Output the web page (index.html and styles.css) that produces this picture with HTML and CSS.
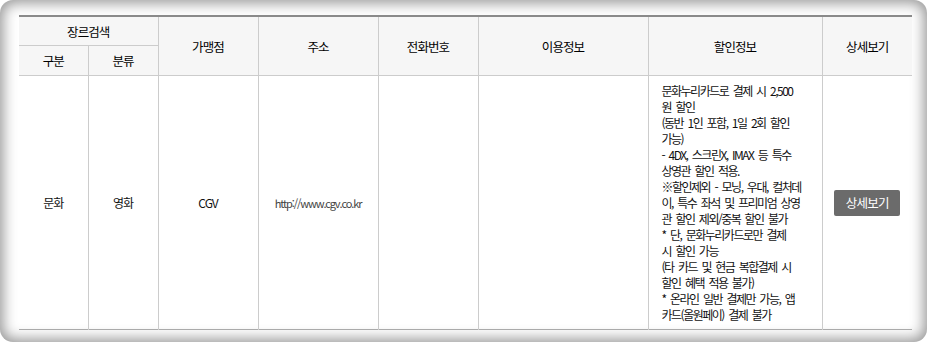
FILE: index.html
```html
<!DOCTYPE html>
<html lang="ko">
<head>
<meta charset="utf-8">
<link rel="stylesheet" href="styles.css">
</head>
<body>
<div class="frame">
  <table class="list">
    <colgroup>
      <col class="c1"><col class="c2"><col class="c3"><col class="c4"><col class="c5"><col class="c6"><col class="c7"><col class="c8">
    </colgroup>
    <thead>
      <tr class="h1">
        <th colspan="2">장르검색</th>
        <th rowspan="2">가맹점</th>
        <th rowspan="2">주소</th>
        <th rowspan="2">전화번호</th>
        <th rowspan="2">이용정보</th>
        <th rowspan="2">할인정보</th>
        <th rowspan="2">상세보기</th>
      </tr>
      <tr class="h2">
        <th>구분</th>
        <th>분류</th>
      </tr>
    </thead>
    <tbody>
      <tr>
        <td>문화</td>
        <td>영화</td>
        <td>CGV</td>
        <td class="url">http://www.cgv.co.kr</td>
        <td></td>
        <td></td>
        <td class="info">문화누리카드로 결제 시 2,500<br>원 할인<br>(동반 1인 포함, 1일 2회 할인<br>가능)<br>- 4DX, 스크린X, IMAX 등 특수<br>상영관 할인 적용.<br>※할인제외 - 모닝, 우대, 컬처데<br>이, 특수 좌석 및 프리미엄 상영<br>관 할인 제외/중복 할인 불가<br>* 단, 문화누리카드로만 결제<br>시 할인 가능<br>(타 카드 및 현금 복합결제 시<br>할인 혜택 적용 불가)<br>* 온라인 일반 결제만 가능, 앱<br>카드(올원페이) 결제 불가</td>
        <td><a class="btn" href="#">상세보기</a></td>
      </tr>
    </tbody>
  </table>
</div>
</body>
</html>
```

FILE: styles.css
```css
html, body {
  margin: 0;
  padding: 0;
  background: #ffffff;
}
.frame {
  box-sizing: border-box;
  width: 927px;
  height: 342px;
  padding: 15px 15px 0 19px;
  border-radius: 13px;
  background: #ffffff;
  box-shadow: inset 0 0 14px 3px rgba(0, 0, 0, 0.42);
  overflow: hidden;
}
.list {
  width: 893px;
  table-layout: fixed;
  border-collapse: collapse;
  font-family: "Noto Sans CJK KR", "Noto Sans", sans-serif;
  color: #222;
  border-top: 2px solid #8a8a8a;
  border-bottom: 1px solid #aaaaaa;
}
.c1 { width: 69px; }
.c2 { width: 70px; }
.c3 { width: 100px; }
.c4 { width: 120px; }
.c5 { width: 100px; }
.c6 { width: 170px; }
.c7 { width: 174px; }
.c8 { width: 90px; }
.list th {
  background: #f6f6f6;
  font-weight: normal;
  font-size: 12.5px;
  letter-spacing: -0.9px;
  color: #000;
  height: 29px;
  padding: 0;
  border: 1px solid #cccccc;
  text-align: center;
  vertical-align: middle;
}
.list tr.h1 th { height: 28px; }
.list th:first-child { border-left: none; }
.list tr.h1 th:last-child { border-right: none; }
.list td {
  border-left: 1px solid #cccccc;
  border-right: 1px solid #cccccc;
  text-align: center;
  vertical-align: middle;
  font-size: 12px;
  letter-spacing: -1px;
  color: #111;
  padding: 0;
}
.list td:first-child { border-left: none; }
.list td:last-child { border-right: none; }
.list td.url {
  color: #444;
  font-size: 11px;
  letter-spacing: -1.1px;
}
.list td.info {
  text-align: left;
  font-size: 12px;
  letter-spacing: -1.5px;
  word-spacing: 2.5px;
  line-height: 16px;
  padding: 7px 4px 6px 13px;
  color: #111;
  white-space: nowrap;
}
.btn {
  display: inline-flex;
  align-items: center;
  justify-content: center;
  width: 66px;
  height: 26px;
  background: #6b6b6b;
  color: #ffffff;
  border-radius: 2px;
  text-decoration: none;
  font-size: 12.5px;
  letter-spacing: -0.8px;
}
```
